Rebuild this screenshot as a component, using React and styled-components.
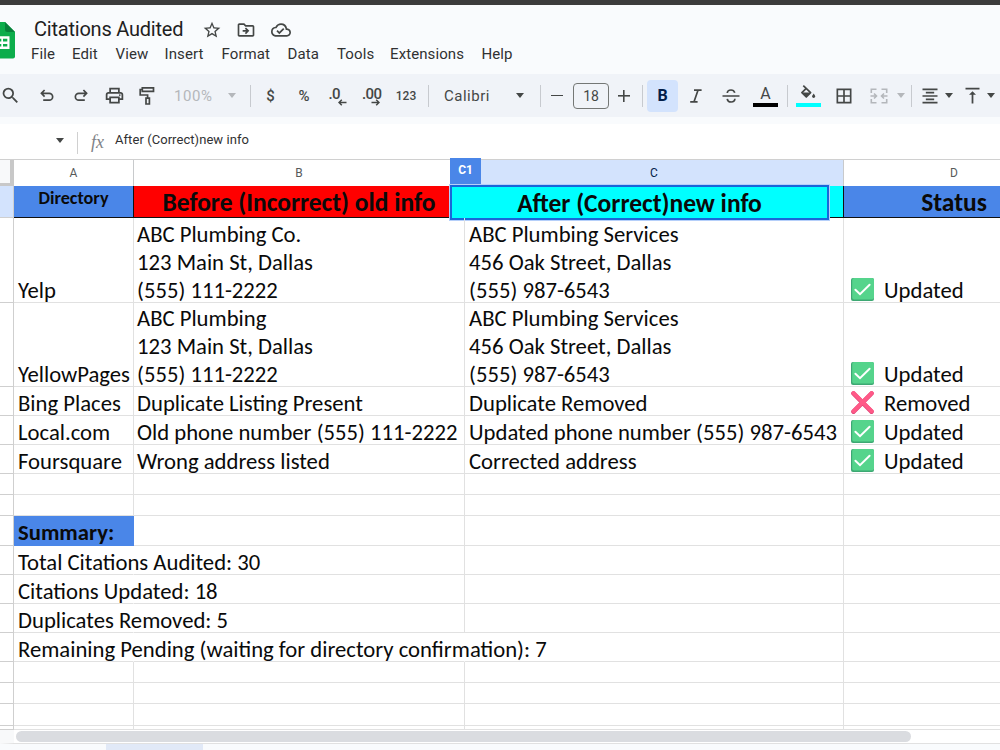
import React from 'react';
import styled, { createGlobalStyle } from 'styled-components';
import {
    MdSearch,
    MdOutlinePrint,
    MdStarBorder,
    MdOutlineDriveFileMove,
    MdOutlineCloudDone,
    MdBorderAll,
    MdFormatAlignCenter,
    MdVerticalAlignTop,
} from 'react-icons/md';

const menus = [
    { name: 'File', width: 41 },
    { name: 'Edit', width: 43.5 },
    { name: 'View', width: 49 },
    { name: 'Insert', width: 57 },
    { name: 'Format', width: 66 },
    { name: 'Data', width: 49.5 },
    { name: 'Tools', width: 53 },
    { name: 'Extensions', width: 91.5 },
    { name: 'Help', width: 40 },
];

const listings = [
    {
        directory: 'Yelp',
        before: ['ABC Plumbing Co.', '123 Main St, Dallas', '(555) 111-2222'],
        after: ['ABC Plumbing Services', '456 Oak Street, Dallas', '(555) 987-6543'],
        status: 'Updated',
        height: 85,
    },
    {
        directory: 'YellowPages',
        before: ['ABC Plumbing', '123 Main St, Dallas', '(555) 111-2222'],
        after: ['ABC Plumbing Services', '456 Oak Street, Dallas', '(555) 987-6543'],
        status: 'Updated',
        height: 84,
    },
    {
        directory: 'Bing Places',
        before: ['Duplicate Listing Present'],
        after: ['Duplicate Removed'],
        status: 'Removed',
        height: 29,
    },
    {
        directory: 'Local.com',
        before: ['Old phone number (555) 111-2222'],
        after: ['Updated phone number (555) 987-6543'],
        status: 'Updated',
        height: 29,
    },
    {
        directory: 'Foursquare',
        before: ['Wrong address listed'],
        after: ['Corrected address'],
        status: 'Updated',
        height: 29,
    },
];

const summary = [
    { text: 'Total Citations Audited: 30' },
    { text: 'Citations Updated: 18' },
    { text: 'Duplicates Removed: 5' },
    { text: 'Remaining Pending (waiting for directory confirmation): 7', long: true },
];

const SheetsLogo = () => (
    <Logo width="15" height="38" viewBox="0 0 15 38">
        <path d="M0 0H5L15 10V34.5Q15 36.5 13 36.5H0Z" fill="#0cad4b" />
        <path d="M5 0L15 10H7.5Q5 10 5 7.5Z" fill="#07803a" />
        <path d="M0 14.3H9.5V27H0V24.6H1.3V22H0V19.4H1.3V16.8H0Z" fill="#fff" />
        <path d="M3 16.8H7.3V19.4H3ZM3 22H7.3V24.6H3Z" fill="#0cad4b" />
    </Logo>
);

const UndoIcon = ({ flip }) => (
    <Stroke width="14" height="13" viewBox="0 0 14 13" $flip={flip}>
        <path d="M4.6 1L1.4 4.3L4.6 7.6M1.6 4.3H9.2A3.4 3.4 0 0 1 9.2 11.2H3.2" />
    </Stroke>
);

const RollerIcon = () => (
    <Stroke width="17" height="20" viewBox="0 0 17 20">
        <path d="M3.3 1.8H14.5V5.4H3.3ZM3.3 3.5H1.2V9H8.6V12M7 12.2H10.4V18H7Z" />
    </Stroke>
);

const ItalicIcon = () => (
    <Stroke width="14" height="14" viewBox="0 0 14 14">
        <path d="M5 1.2H12.6M1.2 12.8H8.6M9 1.2L5 12.8" />
    </Stroke>
);

const StrikeIcon = () => (
    <Stroke width="18" height="16" viewBox="0 0 18 16">
        <path d="M0.5 8H17.5M12.8 4.8C12.2 2.9 11 2 9 2S5.4 2.9 5.3 5M5.2 10.8C5.6 12.9 6.9 14 9.1 14S12.8 13 12.9 10.8" />
    </Stroke>
);

const FillIcon = () => (
    <svg width="18" height="18" viewBox="0 0 18 18">
        <path d="M4.3 1.6L11.6 8.7L7.3 13L2.9 8.7L7.5 4.2" fill="none" stroke="#444746" strokeWidth="1.7" strokeLinejoin="round" />
        <path d="M2.8 8.4H11.8L7.3 13Z" fill="#444746" />
        <path d="M14.7 9.6C15.6 10.9 16.3 11.8 16.3 12.6A1.7 1.7 0 0 1 13 12.6C13 11.8 13.8 10.9 14.7 9.6Z" fill="#444746" />
    </svg>
);

const DecimalIcon = ({ digits, more }) => (
    <Decimal>
        {digits}
        <svg width="9" height="7" viewBox="0 0 9 7">
            <path
                d={more ? 'M0.5 3.5H8M5.2 0.8L8 3.5L5.2 6.2' : 'M8.5 3.5H1M3.8 0.8L1 3.5L3.8 6.2'}
                fill="none"
                stroke="#444746"
                strokeWidth="1.5"
            />
        </svg>
    </Decimal>
);

const MergeIcon = () => (
    <svg width="18" height="16" viewBox="0 0 18 16" fill="none" stroke="#b4b7bb" strokeWidth="1.6">
        <path d="M6.5 1.3H1.3V5M1.3 11V14.7H6.5M11.5 1.3H16.7V5M16.7 11V14.7H11.5" />
        <path d="M0.5 8H6M4 5.5L6.5 8L4 10.5M17.5 8H12M14 5.5L11.5 8L14 10.5" />
    </svg>
);

const CheckMark = () => (
    <Mark width="23" height="23" viewBox="0 0 23 23">
        <rect x="0" y="0" width="23" height="23" rx="2" fill="#3da873" />
        <rect x="1.2" y="0" width="21.8" height="21.6" rx="2" fill="#55d48c" />
        <path d="M4.4 11.8L9 16.2L18.6 6.8" fill="none" stroke="#fff" strokeWidth="2" strokeLinecap="round" />
    </Mark>
);

const CrossMark = () => (
    <Mark width="23" height="23" viewBox="0 0 23 23">
        <path d="M2.5 2.5L20.5 20.7M20.5 2.5L2.5 20.7" stroke="#e04377" strokeWidth="4.6" strokeLinecap="round" />
        <path d="M2.7 2.2L20.6 20.2M20.6 2.2L2.7 20.2" stroke="#ff5987" strokeWidth="4" strokeLinecap="round" />
    </Mark>
);

const App = () => {
    return (
        <Page>
            <GlobalStyle />
            <TopStrip />
            <Header>
                <SheetsLogo />
                <HeaderMain>
                    <TitleRow>
                        <Title>Citations Audited</Title>
                        <MdStarBorder size={20} />
                        <MdOutlineDriveFileMove size={20} />
                        <MdOutlineCloudDone size={20} />
                    </TitleRow>
                    <MenuBar>
                        {menus.map(menu => (
                            <MenuItem key={menu.name} $width={menu.width}>{menu.name}</MenuItem>
                        ))}
                    </MenuBar>
                </HeaderMain>
            </Header>

            <Toolbar>
                <Tool $width={21} $gap={8}><MdSearch size={21} /></Tool>
                <Tool $width={36}><UndoIcon /></Tool>
                <Tool $width={31}><UndoIcon flip /></Tool>
                <Tool $width={37}><MdOutlinePrint size={21} /></Tool>
                <Tool $width={29}><RollerIcon /></Tool>
                <Zoom>100%</Zoom>
                <Tool $width={22}><Caret $faded /></Tool>
                <Divider $left={7} />
                <Tool $width={39}><Sign>$</Sign></Tool>
                <Tool $width={28}><Sign>%</Sign></Tool>
                <Tool $width={39}><DecimalIcon digits=".0" /></Tool>
                <Tool $width={28}><DecimalIcon digits=".00" more /></Tool>
                <Tool $width={42}><Numbers>123</Numbers></Tool>
                <Divider $left={1} />
                <FontName>Calibri</FontName>
                <Caret />
                <Divider $left={16} />
                <Tool $width={32}><Bar /></Tool>
                <SizeBox>18</SizeBox>
                <Tool $width={29}><Plus /></Tool>
                <Divider $left={4} />
                <BoldButton>B</BoldButton>
                <Tool $width={36}><ItalicIcon /></Tool>
                <Tool $width={34}><StrikeIcon /></Tool>
                <Tool $width={35}>
                    <ColorTool $color="#000">A</ColorTool>
                </Tool>
                <Divider $left={4} />
                <Tool $width={40}>
                    <ColorTool $color="#00ffff"><FillIcon /></ColorTool>
                </Tool>
                <Tool $width={31}><MdBorderAll size={20} /></Tool>
                <Tool $width={39}><MergeIcon /></Tool>
                <Caret $faded $shift={-1} />
                <Divider $left={6} />
                <Tool $width={36}><MdFormatAlignCenter size={20} /></Tool>
                <Caret $shift={-3} />
                <Tool $width={39}><MdVerticalAlignTop size={21} /></Tool>
                <Caret $shift={-5} />
            </Toolbar>

            <FormulaBar>
                <Caret />
                <FormulaDivider />
                <Fx>fx</Fx>
                <FormulaText>After (Correct)new info</FormulaText>
            </FormulaBar>

            <ColumnHeads>
                <Corner />
                <Head>A</Head>
                <Head>B</Head>
                <Head $active>C</Head>
                <Head $last>D</Head>
                <CellTag>C1</CellTag>
            </ColumnHeads>

            <Row $height={32}>
                <RowHead $active />
                <HeadCell $small>Directory</HeadCell>
                <HeadCell $color="#ff0000">Before (Incorrect) old info</HeadCell>
                <HeadCell $color="#00ffff" />
                <HeadCell><Shift>Status</Shift></HeadCell>
                <Selection>After (Correct)new info</Selection>
            </Row>

            {listings.map(item => (
                <Row key={item.directory} $height={item.height}>
                    <RowHead />
                    <Cell>{item.directory}</Cell>
                    <Cell $tight>{item.before.map(line => <Line key={line}>{line}</Line>)}</Cell>
                    <Cell>{item.after.map(line => <Line key={line}>{line}</Line>)}</Cell>
                    <StatusCell>
                        {item.status === 'Updated' ? <CheckMark /> : <CrossMark />}
                        {item.status}
                    </StatusCell>
                </Row>
            ))}

            <Row $height={21}><EmptyCells /></Row>
            <Row $height={21}><EmptyCells /></Row>
            <Row $height={30}>
                <RowHead />
                <SummaryCell>Summary:</SummaryCell>
                <Cell />
                <Cell />
                <Cell />
            </Row>
            {summary.map(item => (
                <Row key={item.text} $height={29}>
                    <RowHead />
                    <Cell $open>{item.text}</Cell>
                    <Cell $open={item.long} />
                    <Cell />
                    <Cell />
                </Row>
            ))}
            <Row $height={21}><EmptyCells /></Row>
            <Row $height={21}><EmptyCells /></Row>
            <Row $height={22}><EmptyCells /></Row>
            <Row $height={4}><EmptyCells /></Row>

            <ScrollArea>
                <ScrollThumb />
            </ScrollArea>
            <SheetTabs>
                <ActiveTab />
            </SheetTabs>
        </Page>
    );
};

const EmptyCells = () => (
    <>
        <RowHead />
        <Cell />
        <Cell />
        <Cell />
        <Cell />
    </>
);

export default App;

const GlobalStyle = createGlobalStyle`
    * {
        box-sizing: border-box;
    }
    body {
        margin: 0;
        overflow: hidden;
    }
`;

const Page = styled.div`
    width: 1000px;
    height: 750px;
    overflow: hidden;
    background-color: #fff;
    font-family: Roboto, "Liberation Sans", sans-serif;
    color: #1f1f1f;
`;

const TopStrip = styled.div`
    height: 5px;
    background-color: #3c3c3c;
`;

const Header = styled.header`
    display: flex;
    height: 69px;
    background-color: #f9fbfd;
`;

const Logo = styled.svg`
    flex: none;
    margin-top: 17px;
`;

const HeaderMain = styled.div`
    padding: 10px 0 0 16px;
`;

const TitleRow = styled.div`
    display: flex;
    align-items: center;
    gap: 14.5px;
    height: 29px;
    padding-left: 3px;
    color: #444746;
`;

const Title = styled.div`
    width: 150px;
    margin: 0 3px 2px 0;
    font-size: 20px;
    letter-spacing: -0.22px;
    white-space: nowrap;
    color: #1f1f1f;
`;

const MenuBar = styled.nav`
    display: flex;
    height: 20px;
`;

const MenuItem = styled.div`
    width: ${props => props.$width}px;
    font-size: 15px;
    line-height: 20px;
    letter-spacing: 0.1px;
    color: #303132;
`;

const Toolbar = styled.div`
    display: flex;
    align-items: center;
    height: 43px;
    background-color: #f0f3f8;
    color: #444746;
`;

const Tool = styled.div`
    display: flex;
    flex: none;
    align-items: center;
    justify-content: center;
    width: ${props => props.$width}px;
    margin-right: ${props => props.$gap || 0}px;
`;

const Stroke = styled.svg`
    fill: none;
    stroke: #444746;
    stroke-width: 1.7;
    transform: ${props => props.$flip ? "scaleX(-1)" : "none"};
`;

const Zoom = styled.div`
    width: 59px;
    padding-left: 12px;
    font-size: 15px;
    letter-spacing: 0.6px;
    color: #b4b7bb;
`;

const Caret = styled.span`
    flex: none;
    border: 4.5px solid transparent;
    border-top: 5px solid ${props => props.$faded ? "#b4b7bb" : "#444746"};
    border-bottom: 0;
    margin-left: ${props => props.$shift || 0}px;
`;

const Divider = styled.span`
    flex: none;
    width: 1px;
    height: 22px;
    margin-left: ${props => props.$left}px;
    background-color: #c7cacf;
`;

const Sign = styled.span`
    font-size: 15px;
    font-weight: 500;
`;

const Decimal = styled.span`
    position: relative;
    width: 18px;
    height: 20px;
    font-size: 15px;
    font-weight: 500;
    line-height: 16px;
    letter-spacing: -0.6px;

    svg {
        position: absolute;
        left: 9px;
        bottom: 0;
    }
`;

const Numbers = styled.span`
    font-size: 12px;
    font-weight: 500;
`;

const FontName = styled.div`
    width: 87px;
    padding-left: 15px;
    font-size: 15px;
    letter-spacing: 0.5px;
`;

const Bar = styled.span`
    width: 12px;
    height: 1.6px;
    background-color: #444746;
`;

const Plus = styled.span`
    width: 12px;
    height: 12px;
    background:
        linear-gradient(#444746, #444746) center / 12px 1.6px no-repeat,
        linear-gradient(#444746, #444746) center / 1.6px 12px no-repeat;
`;

const SizeBox = styled.div`
    flex: none;
    width: 36px;
    height: 26px;
    border: 1px solid #747775;
    border-radius: 4px;
    font-size: 14px;
    line-height: 24px;
    text-align: center;
`;

const BoldButton = styled.div`
    flex: none;
    width: 31px;
    height: 32px;
    margin-left: 4px;
    border-radius: 4px;
    background-color: #d3e3fd;
    color: #041e49;
    font-size: 16px;
    font-weight: 700;
    line-height: 32px;
    text-align: center;
`;

const ColorTool = styled.span`
    display: flex;
    flex-direction: column;
    align-items: center;
    width: 25px;
    height: 23px;
    border-bottom: 4px solid ${props => props.$color};
    font-size: 16px;
    line-height: 19px;
`;

const FormulaBar = styled.div`
    display: flex;
    align-items: center;
    height: 43px;
    padding: 0 0 3px 56px;
    border-top: 7px solid #f9fbfd;
    border-bottom: 1px solid #d0d0d0;
`;

const FormulaDivider = styled.span`
    width: 1px;
    height: 22px;
    margin: 5px 13px 0 13px;
    background-color: #d0d0d0;
`;

const Fx = styled.span`
    width: 24px;
    margin-top: 5px;
    font-family: "Liberation Serif", serif;
    font-size: 18px;
    font-style: italic;
    color: #808387;
`;

const FormulaText = styled.span`
    margin-top: -1px;
    font-size: 13px;
    letter-spacing: 0.06px;
    color: #303132;
`;

const columns = '14px 120px 331px 379px 160px';

const ColumnHeads = styled.div`
    position: relative;
    display: grid;
    grid-template-columns: ${columns};
    height: 26px;
`;

const Corner = styled.div`
    border-right: 4px solid #c8c8c8;
    border-bottom: 4px solid #c8c8c8;
    background-color: #f8f9fa;
`;

const Head = styled.div`
    border-right: ${props => props.$last ? "0" : "1px solid #c8cacc"};
    border-bottom: 1px solid #c8cacc;
    background-color: ${props => props.$active ? "#d3e3fd" : "#fff"};
    color: ${props => props.$active ? "#041e49" : "#575a5a"};
    padding-left: ${props => props.$last ? "60px" : "0"};
    font-size: 12px;
    line-height: 26px;
    text-align: center;
`;

const CellTag = styled.div`
    position: absolute;
    left: 450px;
    top: -2px;
    width: 31px;
    height: 27px;
    background-color: #4a86e8;
    color: #fff;
    font-size: 12px;
    font-weight: 700;
    line-height: 25px;
    text-align: center;
`;

const Row = styled.div`
    position: relative;
    display: grid;
    grid-template-columns: ${columns};
    grid-template-rows: 100%;
    height: ${props => props.$height}px;
    font-family: Carlito, Lato, sans-serif;
    font-size: 22.7px;
    color: #0a0a0a;
`;

const RowHead = styled.div`
    border-right: 1px solid #cfcfcf;
    border-bottom: 1px solid #cfcfcf;
    background-color: ${props => props.$active ? "#d3e3fd" : "#fff"};
`;

const Cell = styled.div`
    display: flex;
    flex-direction: column;
    justify-content: flex-end;
    min-width: 0;
    padding-left: ${props => props.$tight ? "3px" : "4px"};
    border-right: 1px solid ${props => props.$open ? "transparent" : "#e1e1e1"};
    border-bottom: 1px solid #e1e1e1;
    line-height: 24px;
    white-space: nowrap;
`;

const Line = styled.div`
    & + & {
        margin-top: 4px;
    }
`;

const StatusCell = styled(Cell)`
    flex-direction: row;
    align-items: flex-end;
    justify-content: flex-start;
    padding-left: 7px;
    border-right: 0;
`;

const Mark = styled.svg`
    flex: none;
    margin: 0 10px 1px 0;
`;

const SummaryCell = styled(Cell)`
    padding-bottom: 1px;
    background-color: #4a86e8;
    border-color: #4a86e8;
    font-weight: 700;
`;

const HeadCell = styled.div`
    border-right: 1px solid #111;
    border-bottom: 1px solid #111;
    background-color: ${props => props.$color || "#4a86e8"};
    font-size: ${props => props.$small ? "18.2px" : "25.5px"};
    font-weight: 700;
    line-height: ${props => props.$small ? "25px" : "33px"};
    text-align: center;
    white-space: nowrap;
    color: #0a0a0a;
`;

const Shift = styled.span`
    padding-left: 61px;
`;

const Selection = styled.div`
    position: absolute;
    left: 450px;
    top: -1px;
    width: 379px;
    height: 35px;
    border: 2px solid #1a66d8;
    outline: 1px solid #b5cffa;
    background-color: #00ffff;
    font-size: 25.5px;
    font-weight: 700;
    line-height: 33px;
    text-align: center;
    color: #0a0a0a;
`;

const ScrollArea = styled.div`
    height: 14px;
    padding: 1px 0 0 2px;
    border-bottom: 1px solid #e1e1e1;
    border-left: 14px solid #f8f9fa;
`;

const ScrollThumb = styled.div`
    width: 895px;
    height: 11px;
    border-radius: 6px;
    background-color: #dadce0;
`;

const SheetTabs = styled.div`
    display: flex;
    height: 7px;
    padding-left: 106px;
    background-color: #f9fbfd;
`;

const ActiveTab = styled.div`
    width: 97px;
    background-color: #e1e9f7;
`;
